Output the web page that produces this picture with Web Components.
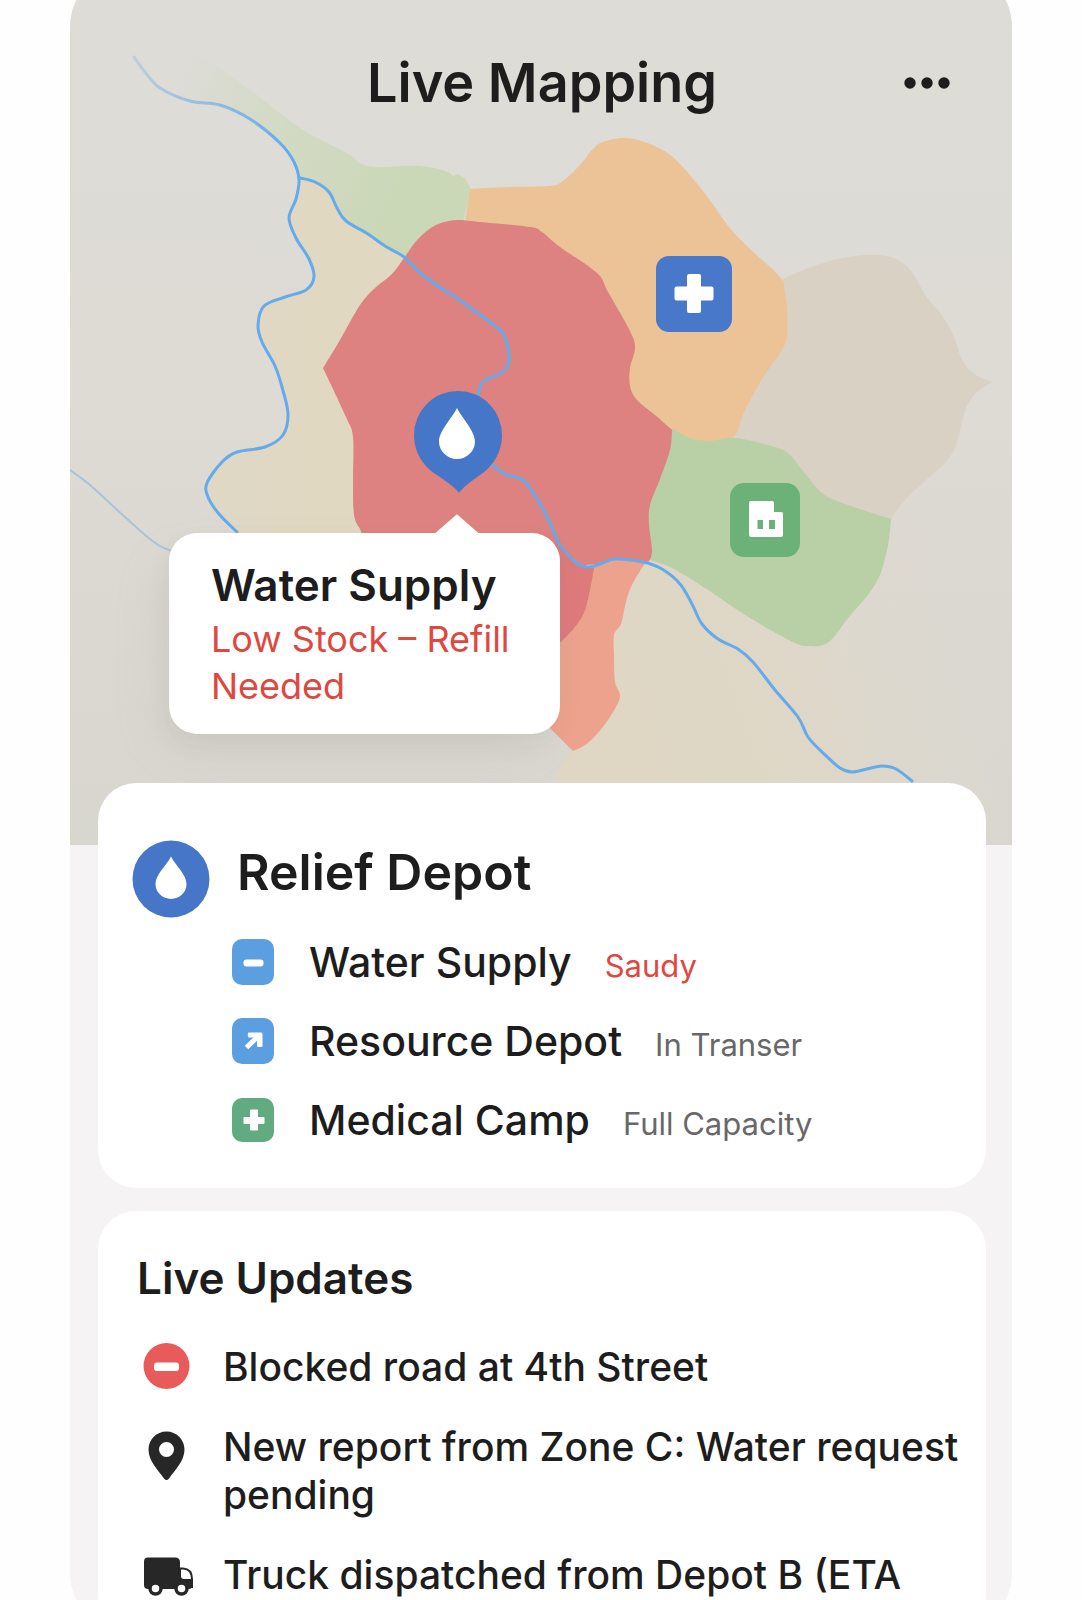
<!DOCTYPE html>
<html lang="en">
<head>
<meta charset="utf-8">
<meta name="viewport" content="width=device-width, initial-scale=1">
<title>Live Mapping</title>
<style>
  html, body { margin: 0; height: 100%; background: #fefefe; }
  body { overflow: hidden; font-family: Inter, "Liberation Sans", sans-serif; color: #1e1d1e; }
</style>
</head>
<body>
<relief-app></relief-app>

<script>
const define = (name, html, setup) => {
  const template = document.createElement('template');
  template.innerHTML = html;
  customElements.define(name, class extends HTMLElement {
    constructor() {
      super();
      this.attachShadow({ mode: 'open' }).append(template.content.cloneNode(true));
    }
    connectedCallback() { if (setup) setup(this, this.shadowRoot); }
  });
};

/* Turns "x,y x,y ..." into a smooth curve through every point. */
const curve = (text, closed = false) => {
  const p = text.trim().split(/\s+/).map(s => s.split(',').map(Number));
  const n = p.length;
  const at = i => closed ? p[(i + n) % n] : p[Math.max(0, Math.min(n - 1, i))];
  let d = `M${p[0]}`;
  for (let i = 0; i < (closed ? n : n - 1); i++) {
    const [a, b, c, e] = [at(i - 1), at(i), at(i + 1), at(i + 2)];
    d += `C${b[0] + (c[0] - a[0]) / 6},${b[1] + (c[1] - a[1]) / 6} ${c[0] - (e[0] - b[0]) / 6},${c[1] - (e[1] - b[1]) / 6} ${c}`;
  }
  return d + (closed ? 'Z' : '');
};

/* Several smooth runs joined with sharp corners where they meet. */
const outline = (...runs) => runs.map((r, i) => i ? curve(r).replace('M', 'L') : curve(r)).join('') + 'Z';

const WEST_RIVER = '134,57 145,72 160,88 190,101 220,105 250,119 280,143 294,162 299,180 296,199 289,218 296,238 309,259 314,277 306,290 285,297 264,306 258,325 262,342 275,366 282,387 288,414 283,435 265,447 237,452 222,462 207,483 208,497 219,514 237,532';
const MID_RIVER = '300,178 315,182 329,192 337,208 346,221 368,234 385,246 404,257 425,277 455,297 480,315 502,332 508,348 509,359 504,371 483,382 478,395';
const EAST_RIVER = '491,464 505,474 523,480 534,494 545,513 553,530 560,545 575,562 588,567 600,564 615,559 643,562 662,569 680,584 692,604 702,624 718,639 738,649 753,662 775,690 798,717 808,737 823,753 840,768 852,772 867,769 882,766 896,769 912,781';

define('zone-map', `
  <style>
    :host { display: block; }
    svg { display: block; width: 100%; height: auto; }
  </style>
  <svg viewBox="70 -33 942 878" aria-hidden="true">
    <defs>
      <linearGradient id="ground" x1="0" y1="0" x2="0" y2="1">
        <stop offset="0" stop-color="#dddcd6"/><stop offset=".2" stop-color="#dddcd7"/>
        <stop offset=".48" stop-color="#dedad4"/><stop offset=".75" stop-color="#dbd8d1"/>
        <stop offset="1" stop-color="#d7d6cf"/>
      </linearGradient>
      <linearGradient id="meadow" gradientUnits="userSpaceOnUse" x1="180" y1="80" x2="400" y2="180">
        <stop offset="0" stop-color="#cbd9b8" stop-opacity="0"/><stop offset=".5" stop-color="#cfd9bd" stop-opacity=".75"/>
        <stop offset="1" stop-color="#cbd8b8"/>
      </linearGradient>
      <linearGradient id="sandEast" gradientUnits="userSpaceOnUse" x1="640" y1="740" x2="980" y2="620">
        <stop offset="0" stop-color="#dfd7c4"/><stop offset=".4" stop-color="#dfd7c7"/>
        <stop offset="1" stop-color="#dfdad0" stop-opacity="0"/>
      </linearGradient>
      <linearGradient id="sandWest" gradientUnits="userSpaceOnUse" x1="230" y1="0" x2="330" y2="0">
        <stop offset="0" stop-color="#dfd8c5"/><stop offset="1" stop-color="#e1d8c1"/>
      </linearGradient>
      <linearGradient id="stream" gradientUnits="userSpaceOnUse" x1="134" y1="57" x2="290" y2="150">
        <stop offset="0" stop-color="#6faee6" stop-opacity=".3"/><stop offset="1" stop-color="#65aae9"/>
      </linearGradient>
      <filter id="soft" x="-30%" y="-30%" width="160%" height="160%"><feGaussianBlur stdDeviation="24"/></filter>
    </defs>
    <rect x="70" y="-33" width="942" height="878" fill="url(#ground)"/>
    <path id="west" fill="url(#sandWest)"/>
    <path id="east" fill="url(#sandEast)"/>
    <rect x="158" y="560" width="384" height="190" rx="28" fill="#8f9088" opacity=".12" filter="url(#soft)"/>
    <path id="north" fill="url(#meadow)"/>
    <path id="tan" fill="#d9d1c3"/>
    <path id="amber" fill="#ebc396"/>
    <path id="green" fill="#b9cfa5"/>
    <path id="coral" fill="#eca28d"/>
    <path id="red" fill="#de8181"/>
    <path id="lobe" fill="#dd7a7c"/>
    <g fill="none" stroke="#65aae9" stroke-width="3" stroke-linecap="round">
      <path id="r1" stroke="url(#stream)"/><path id="r2"/><path id="r3"/>
      <path id="r4" stroke="#a9c3dc" stroke-width="2"/>
    </g>
  </svg>`, (el, root) => {
  const set = (id, d) => root.getElementById(id).setAttribute('d', d);
  set('r1', curve(WEST_RIVER));
  set('r2', curve(MID_RIVER));
  set('r3', curve(EAST_RIVER));
  set('r4', curve('70,470 90,485 115,508 145,535 160,546 172,551'));
  set('west', outline(
    '299,180 296,199 289,218 296,238 309,259 314,277 306,290 285,297 264,306 258,325 262,342 275,366 282,387 288,414 283,435 265,447 237,452 222,462 207,483 208,497 219,514 237,532',
    '237,560 400,560', '404,257 385,246 368,234 346,221 337,208 329,192 315,182 300,178'));
  set('east', outline('645,555 654,556 672,566 705,586 750,616 795,641 823,643', '848,612 876,570 888,516',
    '900,505 940,470 962,425', '1012,400 1012,845', '554,845 556,783 562,765 573,750', '590,730 600,700', '600,620 630,580', '645,555'));
  set('north', outline('160,88 170,60 200,58 250,90 300,128 345,152 362,164 380,167 420,166 445,171 453,176', '458,174 465,179 471,189',
    '464,220', '440,260 404,257', '385,246 368,234 346,221 337,208 329,192 315,182 300,178', '296,165 280,143 250,119 220,105 190,101 160,88'));
  set('tan', outline('783,279 803,270 830,261 855,256 880,255 898,260 912,272 926,296 940,313 950,328 957,345 962,360 974,374 992,382',
    '992,382 976,393 966,408 960,430 955,448 945,463 925,481 908,497 899,508 891,519', '800,540 690,460 733,438', '740,400 770,340'));
  set('amber', outline('470,189 510,187 550,186 563,181 580,165 593,149 603,142 625,138 650,144 675,159 706,195 735,234 779,276 784,288 787,310 787,335 782,350 762,379 744,412 733,438 708,442 690,438 670,429',
    '600,420 464,230'));
  set('green', outline('671,428 690,438 710,441 735,438 775,447 790,455 803,471 822,493 845,504 891,519', '891,519 888,545 880,575 867,596 848,618 834,637 823,645 810,646 795,643 750,618 705,588 672,568 650,560', '640,540 640,450'));
  set('coral', outline('580,575 600,564 615,559 645,563', '645,563 631,587 625,606 621,624 614,635 614,655 615,682 620,697 610,717 597,734 585,745 573,751', '573,751 560,738 540,718', '540,620'));
  set('red', outline('323,368 340,340 360,305 375,288 392,274 404,258 418,239 436,225 457,220 480,222 530,227 542,232 560,247 597,273 608,292 630,331 635,348 630,368 630,386 637,400 655,415 672,430', '672,430 670,450 660,479 650,505 649,525 652,550 649,561 643,562 615,559 600,564', '560,567 375,567', '360,529 354,515 353,480 353,437 346,417 323,368'));
  set('lobe', outline('540,535 560,545 575,562 588,567 594,568', '594,568 590,590 584,613 574,628 561,642', '540,650'));
});

/* Solid icons: each draws its own badge and glyph. */
const ICONS = {
  'drop-pin': [88, 102, '<path fill="#4676c8" d="M44 0a44 44 0 0 1 44 44c0 18-10 32-22 40-10 7-17 12-21 18-4-6-12-11-22-18C10 76 0 62 0 44A44 44 0 0 1 44 0z"/><path fill="#fff" d="M43 17c5 10 18 23 18 33.500a18 17.500 0 0 1-36 0c0-10.500 13-23.500 18-33.500z"/>'],
  'medical': [76, 76, '<rect width="76" height="76" rx="13" fill="#4778c9"/><path fill="#fff" d="M33 18h10q2 0 2 2v10.500h10.500q2 0 2 2v10q0 2-2 2H45V55q0 2-2 2H33q-2 0-2-2V44.500H20.500q-2 0-2-2v-10q0-2 2-2H31V20q0-2 2-2z"/>'],
  'building': [70, 74, '<rect width="70" height="74" rx="14" fill="#6bb178"/><path fill="#fff" fill-rule="evenodd" d="M21 18h21q2 0 2 2v9h7q2 0 2 2v21q0 2-2 2H21q-2 0-2-2V20q0-2 2-2zm6.500 19v9h5.500v-9zm11.500 0v9h6v-9z"/>'],
  'drop': [78, 78, '<circle cx="39" cy="39" r="38.500" fill="#4676c8"/><path fill="#fff" d="M39 16.500c4.500 9 15.500 18 15.500 27.500a15.500 15 0 0 1-31 0c0-9.500 11-18.500 15.500-27.500z"/>'],
  'minus': [42, 46, '<rect width="42" height="46" rx="10" fill="#5c9fe0"/><rect x="11.500" y="20.500" width="20" height="7" rx="3" fill="#fff"/>'],
  'arrow': [42, 46, '<rect width="42" height="46" rx="10" fill="#5c9fe0"/><path d="M14.500 29.500 26 18.500" stroke="#fff" stroke-width="5"/><path fill="#fff" d="M16.500 14.500H29q1.500 0 1.500 1.500v12.500q-3 1-5.500 0v-6l-2.500-3h-6q-1.500-2.500 0-5z"/>'],
  'plus': [42, 46, '<rect y="1" width="42" height="44" rx="10" fill="#62ab80"/><path fill="#fff" d="M19 12.500h6q1 0 1 1v6.500h5.500q1 0 1 1v5q0 1-1 1H26v5.500q0 1-1 1h-6q-1 0-1-1V27h-5.500q-1 0-1-1v-5q0-1 1-1H18v-6.500q0-1 1-1z"/>'],
  'blocked': [48, 48, '<circle cx="23.500" cy="23" r="23" fill="#e85b5a"/><rect x="11" y="19.500" width="25" height="8.500" rx="3" fill="#fff"/>'],
  'place': [48, 58, '<path fill="#272727" fill-rule="evenodd" d="M23.500 8.500c10 0 18 8 18 18 0 11-9 20-15.500 29q-2.500 3-5 0C14.500 46.500 5.500 37.500 5.500 26.500c0-10 8-18 18-18zm0 10.500a7.500 7.500 0 1 0 0 15 7.500 7.500 0 0 0 0-15z"/>'],
  'truck': [50, 48, '<path fill="#272727" d="M5 6.500h27q5 0 5 5V38H5q-4 0-4-4V10.500q0-4 4-4z"/><path fill="#fff" stroke="#272727" stroke-width="2" d="M36 17.500h4q9 .5 9 10.500v8H36z"/><path fill="#272727" d="M36 18h2v7q0 3 3 3h8v7q0 3-3 3H36z"/><g fill="#fff" stroke="#272727" stroke-width="3.500"><circle cx="12.500" cy="37.500" r="5.500"/><circle cx="38.500" cy="37.500" r="5.500"/></g>'],
  'more': [46, 12, '<g fill="#1e1d1e"><circle cx="6" cy="6" r="5.700"/><circle cx="23" cy="6" r="5.700"/><circle cx="40" cy="6" r="5.700"/></g>']
};
define('app-icon', `
  <style>:host { display: block; flex: none; } svg { display: block; }</style>
  <svg aria-hidden="true"></svg>`, (el, root) => {
  const [w, h, shape] = ICONS[el.getAttribute('name')];
  const svg = root.querySelector('svg');
  svg.setAttribute('viewBox', `0 0 ${w} ${h}`);
  svg.setAttribute('width', w);
  svg.setAttribute('height', h);
  svg.innerHTML = shape;
});

define('map-marker', `
  <style>
    :host { position: absolute; }
    button { display: block; padding: 0; border: 0; background: none; cursor: pointer; }
  </style>
  <button><slot></slot></button>`, (el, root) => {
  root.querySelector('button').setAttribute('aria-label', el.getAttribute('label'));
});

define('map-callout', `
  <style>
    :host { position: absolute; box-sizing: border-box; width: 391px; padding: 26px 40px 24px 42px; border-radius: 28px; background: #fff; box-shadow: 0 10px 24px rgba(90, 90, 80, .06); }
    :host::before { content: ""; position: absolute; left: 265px; bottom: 100%; width: 46px; height: 20px; margin-bottom: -1px; background: #fff; clip-path: polygon(50% 0, 100% 100%, 0 100%); }
    h2 { margin: 0; font-size: 44px; line-height: 52px; font-weight: 600; }
    p { margin: 5px 0 0; font-size: 36px; line-height: 47px; color: #e0483f; }
  </style>
  <h2><slot name="title"></slot></h2>
  <p><slot></slot></p>`);

define('app-header', `
  <style>
    :host { display: grid; grid-template-columns: 1fr auto 1fr; align-items: center; height: 64px; padding: 0 62px 0 64px; }
    h1 { grid-column: 2; margin: 0; font-size: 54px; line-height: 64px; font-weight: 600; white-space: nowrap; }
    button { justify-self: end; padding: 0; border: 0; background: none; cursor: pointer; }
  </style>
  <h1><slot></slot></h1>
  <button aria-label="More options"><app-icon name="more"></app-icon></button>`);

define('app-card', `
  <style>
    :host { display: block; border-radius: 38px; background: #fff; }
  </style>
  <slot></slot>`);

define('resource-row', `
  <style>
    :host { display: flex; align-items: center; gap: 35px; height: 46px; }
    div { display: flex; align-items: baseline; gap: 33px; padding-top: 4px; white-space: nowrap; line-height: 46px; }
    .name { font-size: 41px; font-weight: 500; }
    .status { font-size: 31px; color: #68686a; }
    :host([alert]) .status { color: #e0483f; }
  </style>
  <slot name="icon"></slot>
  <div><span class="name"><slot></slot></span><span class="status"><slot name="status"></slot></span></div>`);

define('update-row', `
  <style>
    :host { display: flex; align-items: flex-start; gap: 32px; font-size: 39px; line-height: 48px; font-weight: 500; }
    .icon { height: 48px; flex: none; width: 48px; }
  </style>
  <div class="icon"><slot name="icon"></slot></div>
  <div><slot></slot></div>`);

define('relief-app', `
  <style>
    :host { display: block; height: 100vh; overflow: hidden; }
    main { display: flex; flex-direction: column; height: calc(100vh + 66px); margin: -33px 70px; border-radius: 60px; overflow: hidden; background: #f5f3f4; }
    .map { position: relative; flex: none; }
    app-header { position: absolute; inset: 84px 0 auto; }
    .water { left: 36.500%; top: 48.300%; }
    .camp { left: 62.200%; top: 32.900%; }
    .site { left: 70.100%; top: 58.800%; }
    map-callout { left: 10.500%; top: 64.500%; }
    .cards { position: relative; display: flex; flex-direction: column; flex: 1; gap: 23px; margin: -62px 26px 0 28px; }
    .depot { padding: 57px 34px 45px; }
    .depot header { display: flex; gap: 27px; }
    h2 { margin: 0; font-size: 50px; line-height: 64px; font-weight: 600; }
    .rows { display: flex; flex-direction: column; gap: 33px; margin: 21px 0 0 100px; }
    .updates { flex: 1; padding: 40px 20px 0 39px; }
    .updates h2 { font-size: 44px; line-height: 54px; }
    .list { display: flex; flex-direction: column; gap: 32px; margin: 38px 0 0 6px; }
  </style>
  <main>
    <section class="map" aria-label="Zone map">
      <zone-map></zone-map>
      <app-header>Live Mapping</app-header>
      <map-marker class="water" label="Water Supply"><app-icon name="drop-pin"></app-icon></map-marker>
      <map-marker class="camp" label="Medical Camp"><app-icon name="medical"></app-icon></map-marker>
      <map-marker class="site" label="Resource Depot"><app-icon name="building"></app-icon></map-marker>
      <map-callout><span slot="title">Water Supply</span>Low Stock – Refill Needed</map-callout>
    </section>
    <div class="cards">
      <app-card class="depot">
        <header><app-icon name="drop"></app-icon><h2>Relief Depot</h2></header>
        <div class="rows">
          <resource-row alert><app-icon slot="icon" name="minus"></app-icon>Water Supply<span slot="status">Saudy</span></resource-row>
          <resource-row><app-icon slot="icon" name="arrow"></app-icon>Resource Depot<span slot="status">In Transer</span></resource-row>
          <resource-row><app-icon slot="icon" name="plus"></app-icon>Medical Camp<span slot="status">Full Capacity</span></resource-row>
        </div>
      </app-card>
      <app-card class="updates">
        <h2>Live Updates</h2>
        <div class="list">
          <update-row><app-icon slot="icon" name="blocked"></app-icon>Blocked road at 4th Street</update-row>
          <update-row><app-icon slot="icon" name="place"></app-icon>New report from Zone C: Water request pending</update-row>
          <update-row><app-icon slot="icon" name="truck"></app-icon>Truck dispatched from Depot B (ETA</update-row>
        </div>
      </app-card>
    </div>
  </main>`);
</script>
</body>
</html>
